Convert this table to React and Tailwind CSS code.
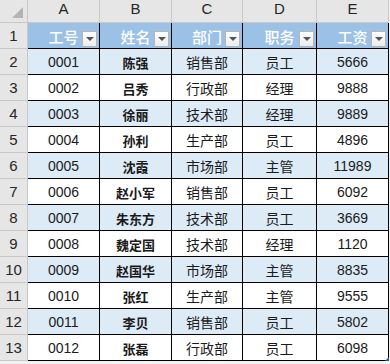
import React from "react";

const rows = [
  ["0001", "陈强", "销售部", "员工", "5666"],
  ["0002", "吕秀", "行政部", "经理", "9888"],
  ["0003", "徐丽", "技术部", "经理", "9889"],
  ["0004", "孙利", "生产部", "员工", "4896"],
  ["0005", "沈霞", "市场部", "主管", "11989"],
  ["0006", "赵小军", "销售部", "员工", "6092"],
  ["0007", "朱东方", "技术部", "员工", "3669"],
  ["0008", "魏定国", "技术部", "经理", "1120"],
  ["0009", "赵国华", "市场部", "主管", "8835"],
  ["0010", "张红", "生产部", "主管", "9555"],
  ["0011", "李贝", "销售部", "员工", "5802"],
  ["0012", "张磊", "行政部", "员工", "6098"],
];

const heads = ["工号", "姓名", "部门", "职务", "工资"];
const letters = ["A", "B", "C", "D", "E"];

const latin = { fontFamily: '"Liberation Sans", Arial, sans-serif' };
const cjk = { fontFamily: '"Noto Sans CJK SC", "Noto Sans", sans-serif' };

const FilterButton = () => (
  <div className="absolute right-[2px] top-[8px] w-[15px] h-[16px] border border-[#b5b5b5] bg-gradient-to-b from-white to-[#ececec] flex items-center justify-center">
    <div className="w-0 h-0 border-l-[4px] border-r-[4px] border-t-[4px] border-l-transparent border-r-transparent border-t-[#555]" />
  </div>
);

const App = () => {
  return (
    <div className="w-[390px] h-[364px] overflow-hidden bg-[#f3f3f3]">
      <div className="grid grid-cols-[28px_72px_72px_71px_74px_72px] grid-rows-[23px_repeat(13,26px)]">
        {/* corner */}
        <div className="relative bg-[#e6e6e6] border-r border-b border-[#c8c8c8]">
          <div className="absolute right-[4px] bottom-[4px] w-0 h-0 border-l-[11px] border-b-[11px] border-l-transparent border-b-[#b4b4b4]" />
        </div>
        {letters.map((l) => (
          <div
            key={l}
            className="bg-[#e6e6e6] border-r border-b border-[#c8c8c8] flex items-end justify-center pb-[2px] text-[15px] text-[#262626]"
            style={latin}
          >
            {l}
          </div>
        ))}

        {/* row 1: table header */}
        <div
          className="bg-[#e6e6e6] border-r border-b border-[#c8c8c8] flex items-end justify-center pb-[1px] text-[15px] text-[#262626]"
          style={latin}
        >
          1
        </div>
        {heads.map((h) => (
          <div
            key={h}
            className="relative bg-[#9bc2e6] border-r border-b border-black flex items-center justify-center pt-[3px] text-[15px] font-medium text-white"
            style={cjk}
          >
            {h}
            <FilterButton />
          </div>
        ))}

        {rows.map((r, i) => {
          const bg = i % 2 === 0 ? "bg-[#ddebf7]" : "bg-white";
          return (
            <React.Fragment key={r[0]}>
              <div
                className="bg-[#e6e6e6] border-r border-b border-[#c8c8c8] flex items-end justify-center pb-[1px] text-[15px] text-[#262626]"
                style={latin}
              >
                {i + 2}
              </div>
              {r.map((v, j) => {
                const isNum = j === 0 || j === 4;
                return (
                  <div
                    key={j}
                    className={`${bg} relative border-r border-b border-black flex items-center justify-center pt-[2px] text-[#1a1a1a] ${
                      j === 1 ? "text-[13px] font-bold" : "text-[14px]"
                    }`}
                    style={isNum ? latin : cjk}
                  >
                    {v}
                    {i === rows.length - 1 && j === 4 && (
                      <div className="absolute right-[-1px] bottom-[-1px] w-0 h-0 border-l-[4px] border-b-[4px] border-l-transparent border-b-[#2e5597]" />
                    )}
                  </div>
                );
              })}
            </React.Fragment>
          );
        })}
      </div>
    </div>
  );
};

export default App;
